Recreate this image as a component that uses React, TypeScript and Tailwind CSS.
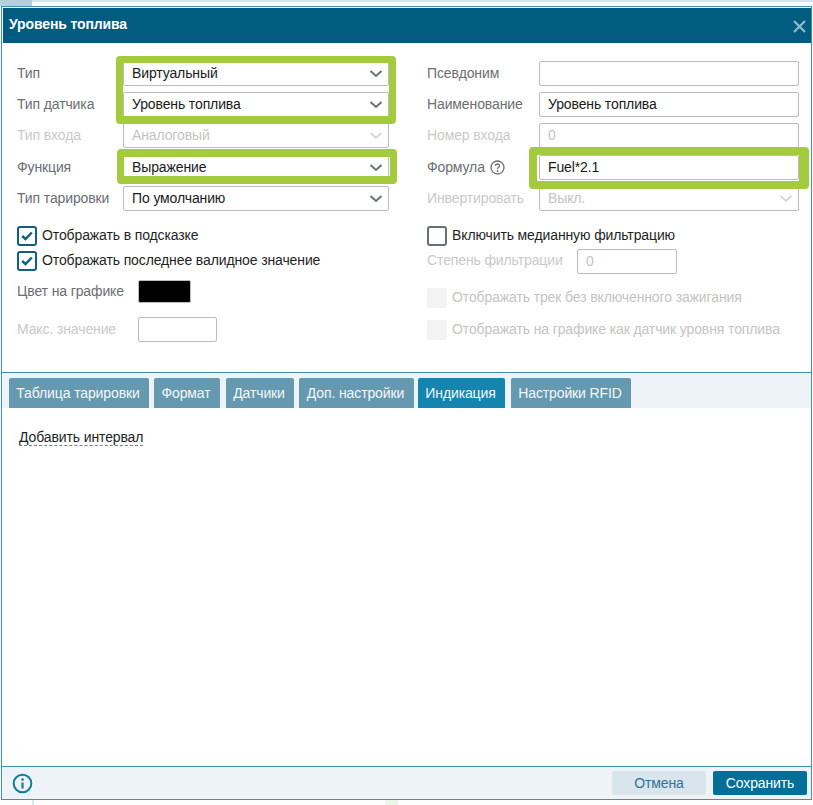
import { ReactNode } from 'react';

function Chevron({ disabled }: { disabled?: boolean }) {
    return (
        <svg className="absolute right-[5px] top-[8px]" width="14" height="8" viewBox="0 0 14 8" fill="none">
            <path d="M1.5 1 L7 6 L12.5 1" stroke={disabled ? '#d5d7d9' : '#6b7178'} strokeWidth="2" />
        </svg>
    );
}

function Select({ value, disabled }: { value: string; disabled?: boolean }) {
    return (
        <div className={`relative h-[25px] flex-1 rounded-[2px] border border-[#bcbcbc] bg-white pl-2 leading-[23px] ${disabled ? 'text-[#c4c4c4]' : 'text-[#1a1a1a]'}`}>
            {value}
            <Chevron disabled={disabled} />
        </div>
    );
}

function Input({ value, disabled, className = 'flex-1' }: { value?: string; disabled?: boolean; className?: string }) {
    return (
        <div className={`h-[25px] rounded-[2px] border border-[#bcbcbc] bg-white pl-2 leading-[22px] ${disabled ? 'text-[#c4c4c4]' : 'text-[#1a1a1a]'} ${className}`}>
            {value}
        </div>
    );
}

function Row({ label, labelWidth = 'w-[106px]', disabled, children }: { label: ReactNode; labelWidth?: string; disabled?: boolean; children: ReactNode }) {
    return (
        <div className="flex h-[25px] items-center">
            <div className={`flex shrink-0 items-center ${labelWidth} ${disabled ? 'text-[#c9c9c9]' : 'text-[#6d6d72]'}`}>{label}</div>
            {children}
        </div>
    );
}

function Checkbox({ label, checked, disabled }: { label: string; checked?: boolean; disabled?: boolean }) {
    return (
        <div className="flex h-5 items-center gap-[5px]">
            {disabled ? (
                <div className="size-5 rounded-[2px] bg-[#f3f3f3]" />
            ) : (
                <div className={`flex size-5 items-center justify-center rounded-[3px] border-2 ${checked ? 'border-[#115f7f]' : 'border-[#666e78]'}`}>
                    {checked && (
                        <svg width="12" height="10" viewBox="0 0 12 10" fill="none">
                            <path d="M1.2 5 L4.5 8 L10.8 1.5" stroke="#115f7f" strokeWidth="2.4" />
                        </svg>
                    )}
                </div>
            )}
            <span className={disabled ? 'text-[#c4c4c4]' : 'text-[#1f1f1f]'}>{label}</span>
        </div>
    );
}

function Tab({ label, active, className }: { label: string; active?: boolean; className: string }) {
    return (
        <div className={`flex h-[30px] items-center justify-center rounded-t-[2px] pr-[2px] text-[#f4f8fa] ${active ? 'bg-[#1385ae]' : 'bg-[#6499b0]'} ${className}`}>
            {label}
        </div>
    );
}

export default function App() {
    return (
        <div className="relative h-[805px] w-[813px] overflow-hidden bg-[#fbfcfb] pl-px pt-[6px] font-['Liberation_Sans',Arial,sans-serif] text-[14px] tracking-[-0.12px]">
            {/* Page behind the dialog */}
            <div className="absolute left-0 top-0 h-[2px] w-full bg-[#cfe5f0]" />
            <div className="absolute left-0 top-0 h-[6px] w-[32px] bg-[#b5d0dd]" />
            <div className="absolute bottom-0 left-[32px] h-[5px] w-[2px] bg-[#d5e6f0]" />
            <div className="absolute bottom-0 left-[385px] h-[5px] w-[13px] bg-[#eef5ea]" />

            {/* Dialog */}
            <div className="relative flex h-[794px] w-[811px] flex-col border border-[#3b93bd] bg-white">
                <header className="ml-px mt-px flex h-[35px] shrink-0 items-center justify-between bg-[#015c7f] pb-[2px] pl-[6px] pr-[4px]">
                    <h1 className="text-[14px] font-bold text-white">Уровень топлива</h1>
                    <svg width="15" height="15" viewBox="0 0 15 15" fill="none" className="mt-[4px]">
                        <path d="M2 2 L13 13 M13 2 L2 13" stroke="#8fbccd" strokeWidth="2.2" />
                    </svg>
                </header>

                {/* Form */}
                <div className="flex h-[329px] shrink-0 gap-[38px] pl-[15px] pt-[18px]">
                    <div className="w-[372px]">
                        <div className="flex flex-col gap-[6.2px]">
                            <Row label="Тип"><Select value="Виртуальный" /></Row>
                            <Row label="Тип датчика"><Select value="Уровень топлива" /></Row>
                            <Row label="Тип входа" disabled><Select value="Аналоговый" disabled /></Row>
                            <Row label="Функция"><Select value="Выражение" /></Row>
                            <Row label="Тип тарировки"><Select value="По умолчанию" /></Row>
                        </div>
                        <div className="mt-[15px] flex flex-col gap-[5px]">
                            <Checkbox label="Отображать в подсказке" checked />
                            <Checkbox label="Отображать последнее валидное значение" checked />
                        </div>
                        <div className="mt-[10.2px] flex h-[22px] items-center">
                            <span className="w-[121px] text-[#6d6d72]">Цвет на графике</span>
                            <div className="h-[23px] w-[53px] rounded-[2px] border border-[#bcbcbc] bg-black" />
                        </div>
                        <div className="mt-[14px] flex items-center">
                            <span className="w-[121px] text-[#c9c9c9]">Макс. значение</span>
                            <Input className="w-[79px]" disabled />
                        </div>
                    </div>

                    <div className="w-[372px]">
                        <div className="flex flex-col gap-[6.2px]">
                            <Row label="Псевдоним" labelWidth="w-[112px]"><Input /></Row>
                            <Row label="Наименование" labelWidth="w-[112px]"><Input value="Уровень топлива" /></Row>
                            <Row label="Номер входа" labelWidth="w-[112px]" disabled><Input value="0" disabled /></Row>
                            <Row
                                labelWidth="w-[112px]"
                                label={
                                    <>
                                        Формула
                                        <svg className="ml-[5px]" width="15" height="15" viewBox="0 0 15 15" fill="none">
                                            <circle cx="7.5" cy="7.5" r="6.5" stroke="#6d6d72" strokeWidth="1.3" />
                                            <path d="M5.4 5.9 C5.5 3.4 9.6 3.4 9.6 5.8 C9.6 7.3 7.5 7.2 7.5 9" stroke="#6d6d72" strokeWidth="1.4" />
                                            <circle cx="7.5" cy="11" r="0.9" fill="#6d6d72" />
                                        </svg>
                                    </>
                                }
                            >
                                <Input value="Fuel*2.1" />
                            </Row>
                            <Row label="Инвертировать" labelWidth="w-[112px]" disabled><Select value="Выкл." disabled /></Row>
                        </div>
                        <div className="mt-[15px]">
                            <Checkbox label="Включить медианную фильтрацию" />
                        </div>
                        <div className="mt-[3px] flex items-center">
                            <span className="w-[150px] pb-[2px] text-[#c9c9c9]">Степень фильтрации</span>
                            <Input value="0" className="w-[100px]" disabled />
                        </div>
                        <div className="mt-[14px] flex flex-col gap-3">
                            <Checkbox label="Отображать трек без включенного зажигания" disabled />
                            <Checkbox label="Отображать на графике как датчик уровня топлива" disabled />
                        </div>
                    </div>
                </div>

                {/* Tabs */}
                <div className="flex h-[36px] shrink-0 items-end border-t border-[#3b93bd] bg-[#eef3f7] pl-[7px]">
                    <Tab label="Таблица тарировки" className="w-[140px]" />
                    <Tab label="Формат" className="ml-[5px] w-[66px]" />
                    <Tab label="Датчики" className="ml-[6px] w-[68px]" />
                    <Tab label="Доп. настройки" className="ml-[5px] w-[115px]" />
                    <Tab label="Индикация" active className="ml-[4px] w-[87px]" />
                    <Tab label="Настройки RFID" className="ml-[6px] w-[120px]" />
                </div>

                <div className="flex-1 pl-[17px] pt-[19px]">
                    <span className="border-b border-dashed border-[#3b93bd] leading-[15px] text-[#1f1f1f]">Добавить интервал</span>
                </div>

                {/* Footer */}
                <footer className="flex h-[33px] shrink-0 items-center justify-between border-t border-[#3b93bd] bg-[#eef3f7] pl-[10px] pr-[4px]">
                    <svg width="21" height="21" viewBox="0 0 21 21" fill="none">
                        <circle cx="10.5" cy="10.5" r="8.8" stroke="#0f7ca3" strokeWidth="2" />
                        <circle cx="10.5" cy="6.6" r="1.3" fill="#0f7ca3" />
                        <path d="M10.5 9.5 V15.5" stroke="#0f7ca3" strokeWidth="2.2" />
                    </svg>
                    <div className="flex gap-[7px]">
                        <button className="h-6 w-[94px] rounded-[2px] bg-[#d9e5ec] text-[#2f7294]">Отмена</button>
                        <button className="h-6 w-[94px] rounded-[2px] bg-[#016f97] text-white">Сохранить</button>
                    </div>
                </footer>
            </div>

            {/* Green highlights drawn over the form */}
            <div className="pointer-events-none absolute left-[116px] top-[56px] h-[68px] w-[280px] rounded-[4px] border-[7px] border-[#a4cb3d] border-b-8" />
            <div className="pointer-events-none absolute left-[117px] top-[149px] h-[35px] w-[280px] rounded-[4px] border-[8px] border-x-[7px] border-[#a4cb3d]" />
            <div className="pointer-events-none absolute left-[529px] top-[147px] h-[42px] w-[280px] rounded-[4px] border-[8px] border-r-[10px] border-[#a4cb3d]" />
        </div>
    );
}
